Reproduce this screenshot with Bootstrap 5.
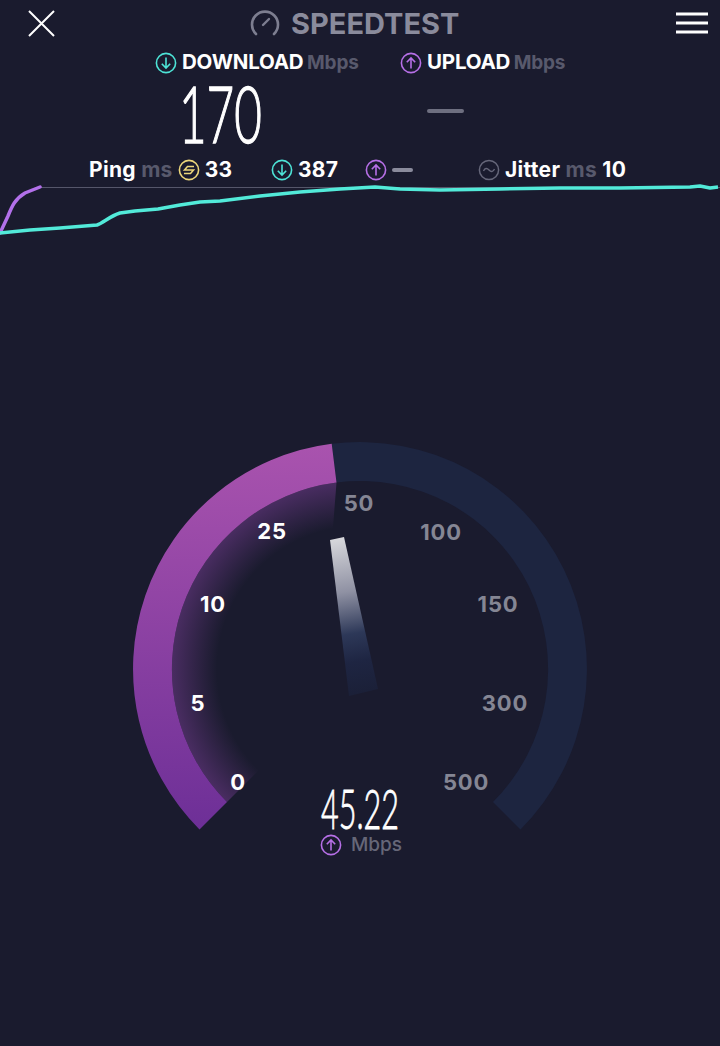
<!DOCTYPE html>
<html lang="en">
<head>
    <meta charset="UTF-8">
    <meta name="viewport" content="width=device-width, initial-scale=1.0">
    <title>Speedtest</title>
    <link href="https://cdn.jsdelivr.net/npm/bootstrap@5.3.2/dist/css/bootstrap.min.css" rel="stylesheet">
    <style>
        html, body { background: #1a1b2e; }
        body { width: 720px; height: 1046px; overflow: hidden; font-family: Inter, "Liberation Sans", sans-serif; color: #fff; }
        .top-bar { height: 46px; padding: 0 12px 0 28px; }
        .brand { margin-left: 195px; font-size: 29px; font-weight: 700; color: #8a8b9c; line-height: 1; gap: 11px; }
        .stats-row { height: 105px; padding-left: 155px; margin-top: 4px; }
        .stat-block { width: 245px; }
        .stat-label { font-size: 20.5px; font-weight: 700; line-height: 24px; gap: 5px; letter-spacing: -.2px; }
        .muted-unit { color: #58596c; font-weight: 700; }
        .stat-label .muted-unit { font-size: 19px; margin-left: -1px; }
        .big-value { font-family: Lato, sans-serif; font-weight: 300; -webkit-text-stroke: 1.4px #fff; font-size: 78px; line-height: 66px; margin: 5px 0 0 24px; transform: scaleX(.61); transform-origin: left center; }
        .big-dash { width: 37px; height: 4px; border-radius: 2px; background: #6e6f80; margin: 34px 0 0 27px; }
        .ping-row { height: 30px; padding-left: 89px; font-size: 21px; font-weight: 700; letter-spacing: .3px; }
        .ping-item { gap: 5px; }
        .ping-a { width: 182px; }
        .ping-b { width: 94px; }
        .ping-c { width: 113px; }
        .small-dash { width: 21px; height: 4px; border-radius: 2px; background: #8a8b9c; }
        .graph { display: block; margin-top: -5px; }
        .gauge { display: block; margin-top: 190px; }
        .dial-num { font-family: Inter, "Liberation Sans", sans-serif; font-size: 22px; font-weight: 700; letter-spacing: .8px; text-anchor: middle; }
        .readout { font-family: Lato, sans-serif; font-weight: 300; font-size: 55px; fill: #fff; stroke: #fff; stroke-width: .9px; }
    </style>
</head>
<body>
    <svg width="0" height="0" class="position-absolute">
        <defs>
            <symbol id="icon-down" viewBox="0 0 22 22">
                <circle cx="11" cy="11" r="9.6" fill="none" stroke="#4de3d6" stroke-width="1.6"/>
                <path d="M11 5.5V16M6.8 11.8 11 16l4.2-4.2" fill="none" stroke="#4de3d6" stroke-width="1.6"/>
            </symbol>
            <symbol id="icon-up" viewBox="0 0 22 22">
                <circle cx="11" cy="11" r="9.6" fill="none" stroke="#b66fe6" stroke-width="1.6"/>
                <path d="M11 16.5V6M6.8 10.2 11 6l4.2 4.2" fill="none" stroke="#b66fe6" stroke-width="1.6"/>
            </symbol>
        </defs>
    </svg>

    <div class="top-bar d-flex align-items-center">
        <svg width="27" height="27" viewBox="0 0 27 27"><path d="M1 1 26 26M26 1 1 26" stroke="#fff" stroke-width="2"/></svg>
        <div class="brand d-flex align-items-center">
            <svg width="30" height="26" viewBox="0 0 30 26"><path d="M6 24A13 13 0 1 1 24 24" fill="none" stroke="#7d7e90" stroke-width="2.6" stroke-linecap="round"/><path d="M13 15 19 9" stroke="#7d7e90" stroke-width="2.4" stroke-linecap="round"/></svg>
            <span>SPEEDTEST</span>
        </div>
        <svg class="ms-auto" width="32" height="22" viewBox="0 0 32 22"><path d="M0 2H32M0 11H32M0 20H32" stroke="#fff" stroke-width="3"/></svg>
    </div>

    <div class="stats-row d-flex">
        <div class="stat-block">
            <div class="stat-label d-flex align-items-center">
                <svg width="22" height="22"><use href="#icon-down"/></svg>
                <span>DOWNLOAD <span class="muted-unit">Mbps</span></span>
            </div>
            <div class="big-value">170</div>
        </div>
        <div class="stat-block">
            <div class="stat-label d-flex align-items-center">
                <svg width="22" height="22"><use href="#icon-up"/></svg>
                <span>UPLOAD <span class="muted-unit">Mbps</span></span>
            </div>
            <div class="big-dash"></div>
        </div>
    </div>

    <div class="ping-row d-flex align-items-center">
        <div class="ping-item ping-a d-flex align-items-center">
            <span>Ping <span class="muted-unit">ms</span></span>
            <svg width="22" height="22" viewBox="0 0 22 22"><circle cx="11" cy="11" r="9.6" fill="none" stroke="#ecd67a" stroke-width="1.6"/><path d="M16 7.5H9.5L6.5 11H15.5L12.5 14.5H6" fill="none" stroke="#ecd67a" stroke-width="1.6"/></svg>
            <span>33</span>
        </div>
        <div class="ping-item ping-b d-flex align-items-center">
            <svg width="22" height="22"><use href="#icon-down"/></svg>
            <span>387</span>
        </div>
        <div class="ping-item ping-c d-flex align-items-center">
            <svg width="22" height="22"><use href="#icon-up"/></svg>
            <div class="small-dash"></div>
        </div>
        <div class="ping-item d-flex align-items-center">
            <svg width="22" height="22" viewBox="0 0 22 22"><circle cx="11" cy="11" r="9.6" fill="none" stroke="#66677a" stroke-width="1.5"/><path d="M5.5 12C7 8.8 9 8.8 11 11S15 13.2 16.5 10" fill="none" stroke="#66677a" stroke-width="1.4"/></svg>
            <span>Jitter <span class="muted-unit">ms</span> 10</span>
        </div>
    </div>

    <svg class="graph" width="720" height="60" viewBox="0 180 720 60">
        <path d="M40 187.5H720" stroke="#55566a" stroke-width="1"/>
        <path d="M0 233 8 216C12 206 15 199 25 193L40 187" fill="none" stroke="#b270ea" stroke-width="3.5" stroke-linecap="round"/>
        <path d="M0 233 30 230 60 228 97 225C103 223 110 216 120 213L135 211 158 209 180 205 200 202 220 201 260 196 300 192 340 189 375 187 400 189 440 190 500 189 560 188 620 188 690 187 700 186 710 188 718 187" fill="none" stroke="#52ead9" stroke-width="3.5" stroke-linejoin="round"/>
    </svg>

    <svg class="gauge" width="720" height="440" viewBox="0 430 720 440">
        <defs>
            <linearGradient id="arcFill" gradientUnits="userSpaceOnUse" x1="0" y1="445" x2="0" y2="830">
                <stop offset="0" stop-color="#a953ae"/>
                <stop offset="1" stop-color="#6d2f97"/>
            </linearGradient>
            <radialGradient id="arcGlow" gradientUnits="userSpaceOnUse" cx="360" cy="669" r="188">
                <stop offset=".76" stop-color="#8a45a8" stop-opacity="0"/>
                <stop offset="1" stop-color="#8a45a8" stop-opacity=".42"/>
            </radialGradient>
            <linearGradient id="needleFill" gradientUnits="userSpaceOnUse" x1="337" y1="538" x2="364" y2="692">
                <stop offset="0" stop-color="#d8d8dc"/>
                <stop offset=".35" stop-color="#8f91a3"/>
                <stop offset=".62" stop-color="#2d3858"/>
                <stop offset=".8" stop-color="#1e2542"/>
                <stop offset="1" stop-color="#1b2038"/>
            </linearGradient>
        </defs>
        <path d="M331.7 443.8A227 227 0 0 1 520.5 829.5L493 802A188 188 0 0 0 336.5 482.5Z" fill="#1d2540"/>
        <path d="M227 802A188 188 0 0 1 336.5 482.5L332 540 360 669Z" fill="url(#arcGlow)"/>
        <path d="M199.5 829.5A227 227 0 0 1 331.7 443.8L336.5 482.5A188 188 0 0 0 227 802Z" fill="url(#arcFill)"/>
        <polygon points="330,540 344,537 378,689 349,696" fill="url(#needleFill)"/>

        <g class="dial-num" fill="#fff">
            <text x="238" y="790">0</text>
            <text x="198" y="711">5</text>
            <text x="213" y="612">10</text>
            <text x="272" y="539">25</text>
        </g>
        <g class="dial-num" fill="#858694">
            <text x="359" y="511">50</text>
            <text x="441" y="540">100</text>
            <text x="498" y="612">150</text>
            <text x="505" y="711">300</text>
            <text x="466" y="790">500</text>
        </g>
        <text class="readout" x="321" y="829" textLength="78" lengthAdjust="spacingAndGlyphs">45.22</text>
        <use href="#icon-up" x="320" y="834" width="22" height="22"/>
        <text x="351" y="851" font-family="Inter, sans-serif" font-size="19" font-weight="500" fill="#666778">Mbps</text>
    </svg>

    <script src="https://cdn.jsdelivr.net/npm/bootstrap@5.3.2/dist/js/bootstrap.bundle.min.js"></script>
</body>
</html>
